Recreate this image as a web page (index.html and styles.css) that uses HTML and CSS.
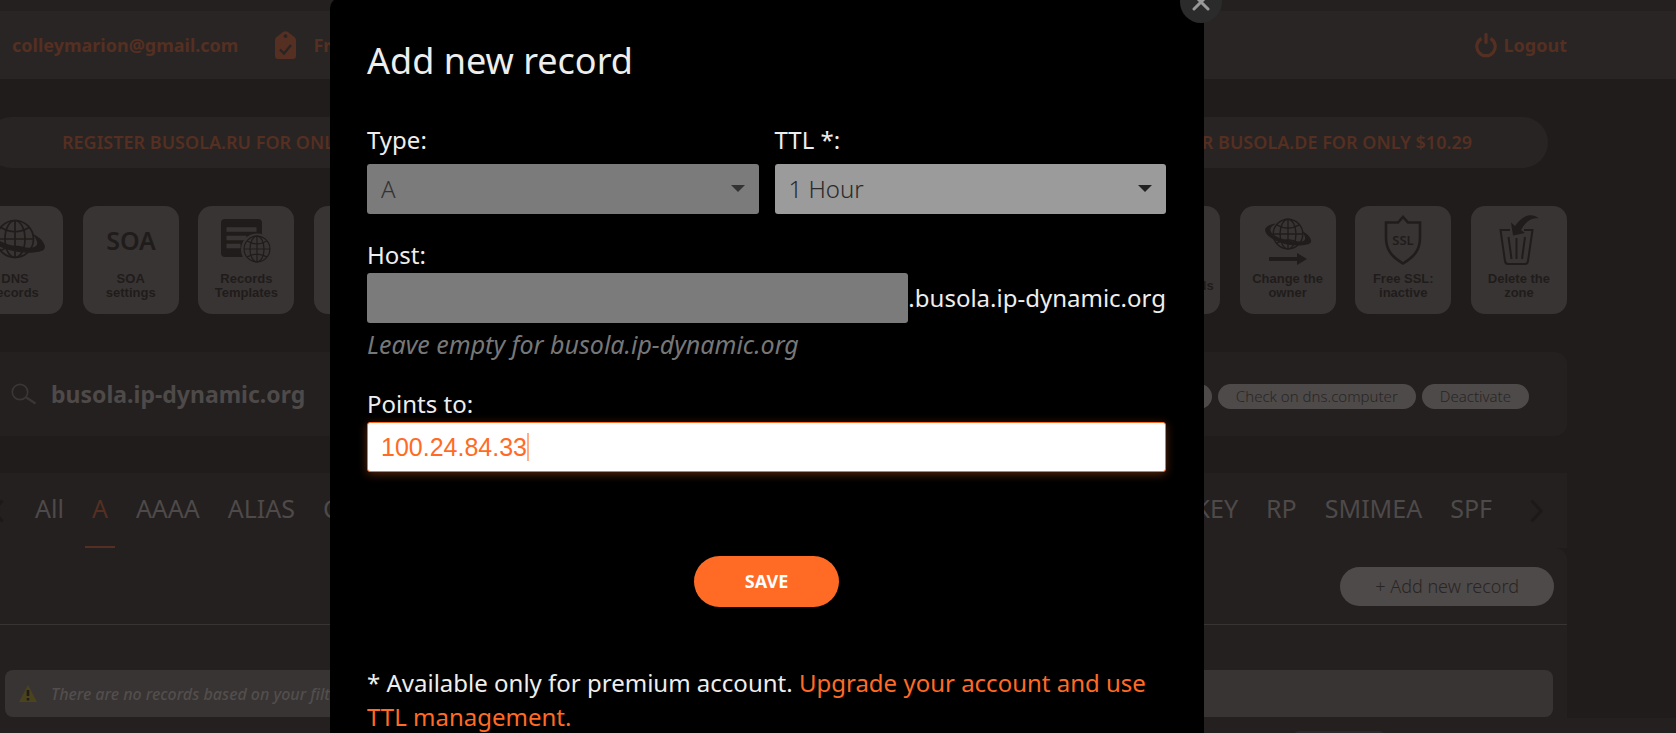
FILE: index.html
```
<!DOCTYPE html>
<html lang="en">
<head>
<meta charset="utf-8">
<title>Add new record</title>
<link rel="stylesheet" href="styles.css">
</head>
<body>
<svg class="symbols" aria-hidden="true">
  <symbol id="globe" viewBox="0 0 40 40">
    <g fill="none" stroke="currentColor" stroke-width="1.7">
      <circle cx="20" cy="20" r="18.5"/>
      <path d="M20 1.5v37M1.5 20h37M6 8.500Q20 17 34 8.500M6 31.500Q20 23 34 31.500"/>
      <ellipse cx="20" cy="20" rx="10" ry="18.500"/>
    </g>
  </symbol>
  <symbol id="ring" viewBox="24 16 48 25">
    <path fill="currentColor" d="M36 17.500C28 18.500 23 22 26 27C30 34 46 40 60 39.500C68 39 72 38 71 34C70 30 66 27 62 25C63 27 64 28 65 31C66 35 62 36 56 35.500C46 35 34 31 31 26C29 22 32 20 36 17.500Z"/>
  </symbol>
</svg>
<div class="page">
  <div class="topstrip"></div>
  <header class="header">
    <div class="container header-row">
      <a class="account" href="#">colleymarion@gmail.com</a>
      <a class="plan" href="#">
        <svg width="22" height="28" viewBox="0 0 22 28" aria-hidden="true"><path fill="currentColor" fill-rule="evenodd" d="M8 1Q10.500-.7 13 1L20 6.500Q21 7.500 21 9V25Q21 28 18 28H3Q0 28 0 25V9Q0 7.500 1 6.500ZM10.500 3.200a1.900 1.900 0 1 0 .01 0Z"/><path d="M5 18.500l4 4 7-8.500" fill="none" stroke="#292524" stroke-width="2.400"/></svg>
        <span>Free</span>
      </a>
      <a class="logout" href="#">
        <svg width="22" height="25" viewBox="0 0 22 25" aria-hidden="true"><g fill="none" stroke="currentColor" stroke-width="3.200"><path d="M6.500 5.500A9.200 9.200 0 1 0 15.500 5.500"/><path d="M11 1.500v8" stroke-linecap="round"/></g></svg>
        <span>Logout</span>
      </a>
    </div>
  </header>

  <main class="container">
    <div class="promo">
      <a href="#">REGISTER BUSOLA.RU FOR ONLY $4.99</a>
      <a href="#">REGISTER BUSOLA.DE FOR ONLY $10.29</a>
    </div>

    <nav class="cards">
      <a class="card" href="#">
        <svg viewBox="0 0 96 60" aria-hidden="true"><use href="#globe" x="28" y="13" width="40" height="40"/><use href="#ring" x="17" y="16" width="62" height="33"/></svg>
        <span>DNS<br>records</span>
      </a>
      <a class="card" href="#">
        <svg viewBox="0 0 96 60" aria-hidden="true"><text class="soa" x="48" y="44" text-anchor="middle">SOA</text></svg>
        <span>SOA<br>settings</span>
      </a>
      <a class="card" href="#">
        <svg viewBox="0 0 96 60" aria-hidden="true"><rect x="23" y="13" width="41" height="38" rx="4" fill="currentColor"/><path class="tile-line" d="M28.500 23.500h30M28.500 32h20M28.500 40h14" stroke-width="4.500"/><circle class="tile-fill" cx="59" cy="43.500" r="16"/><use href="#globe" x="45" y="29" width="28" height="28"/></svg>
        <span>Records<br>Templates</span>
      </a>
      <a class="card" href="#"></a>
      <a class="card" href="#"></a>
      <a class="card" href="#"></a>
      <a class="card" href="#"></a>
      <a class="card" href="#"></a>
      <a class="card" href="#"></a>
      <a class="card" href="#"></a>
      <a class="card" href="#">
        <svg viewBox="0 0 96 60" aria-hidden="true"></svg>
        <span>Mail forwards</span>
      </a>
      <a class="card" href="#">
        <svg viewBox="0 0 96 60" aria-hidden="true"><use href="#globe" x="32" y="12" width="32" height="32"/><use href="#ring" x="24" y="16" width="48" height="25"/><path fill="currentColor" d="M29 51h28v-4l10 6-10 6v-4H29z"/></svg>
        <span>Change the<br>owner</span>
      </a>
      <a class="card" href="#">
        <svg viewBox="0 0 96 60" aria-hidden="true"><path fill="none" stroke="currentColor" stroke-width="2.600" d="M31 16.500h12l5-5.500 5 5.500h12V32C65 44 59 51 48 57.500C37 51 31 44 31 32Z"/><text class="ssl" x="48" y="39" text-anchor="middle">SSL</text></svg>
        <span>Free SSL:<br>inactive</span>
      </a>
      <a class="card" href="#">
        <svg viewBox="0 0 96 60" aria-hidden="true"><path fill="none" stroke="currentColor" stroke-width="2" d="M39 24H29.500L34 55Q34.500 58 37 58H54Q56.500 58 57 55L61.500 24H53M37.500 31l3 22M45.500 32v21M54 31l-3 22"/><path fill="currentColor" d="M40 16.500l4 3.500C51 10 60 6 68 12.500C61 11 55 15 50 24l4 3L42 29.500Z"/></svg>
        <span>Delete the<br>zone</span>
      </a>
    </nav>

    <section class="domain">
      <svg width="26" height="22" viewBox="0 0 26 22" aria-hidden="true"><g fill="none" stroke="currentColor" stroke-width="1.700"><circle cx="9" cy="9" r="7.700"/><path d="M14.500 14l10 6.500" stroke-width="2.200"/></g></svg>
      <h1>busola.ip-dynamic.org</h1>
      <div class="domain-actions">
        <button class="pill" type="button">Update</button>
        <button class="pill" type="button">Check on dns.computer</button>
        <button class="pill" type="button">Deactivate</button>
      </div>
    </section>

    <nav class="tabs">
      <svg width="13" height="24" viewBox="0 0 13 24" aria-hidden="true"><path d="M11.500 1.500L2 12l9.500 10.500" fill="none" stroke="currentColor" stroke-width="3"/></svg>
      <div class="tab-list">
        <a href="#">All</a>
        <a class="active" href="#">A</a>
        <a href="#">AAAA</a>
        <a href="#">ALIAS</a>
        <a href="#">CNAME</a>
        <a class="tab-push" href="#">OPENPGPKEY</a>
        <a href="#">RP</a>
        <a href="#">SMIMEA</a>
        <a href="#">SPF</a>
      </div>
      <svg width="13" height="24" viewBox="0 0 13 24" aria-hidden="true"><path d="M1.500 1.500L11 12l-9.500 10.500" fill="none" stroke="currentColor" stroke-width="3"/></svg>
    </nav>

    <section class="records">
      <div class="toolbar"><button class="add" type="button">+ Add new record</button></div>
      <p class="notice">
        <svg width="18" height="17" viewBox="0 0 18 17" aria-hidden="true"><path fill="#4b431c" d="M9 0L18 17H0Z"/><path d="M9 5v6M9 13v2.500" stroke="#201c1b" stroke-width="2.600"/></svg>
        <span>There are no records based on your filtration.</span>
      </p>
    </section>
  </main>
  <footer class="footer"><div class="container footer-row"><div class="footer-tag"></div></div></footer>

  <div class="overlay">
    <form class="modal" role="dialog" aria-labelledby="modal-title">
      <button class="close" type="button" aria-label="Close">
        <svg width="18" height="18" viewBox="0 0 18 18" aria-hidden="true"><path d="M2 2l14 14M16 2L2 16" stroke="currentColor" stroke-width="3" stroke-linecap="round"/></svg>
      </button>
      <h2 id="modal-title">Add new record</h2>
      <div class="pair">
        <div class="field">
          <label for="type">Type:</label>
          <div class="select-box disabled">
            <select id="type" disabled><option>A</option></select>
            <svg width="14" height="7" viewBox="0 0 14 7" aria-hidden="true"><path d="M0 0h14L7 7z" fill="currentColor"/></svg>
          </div>
        </div>
        <div class="field">
          <label for="ttl">TTL *:</label>
          <div class="select-box">
            <select id="ttl"><option>1 Hour</option></select>
            <svg width="14" height="7" viewBox="0 0 14 7" aria-hidden="true"><path d="M0 0h14L7 7z" fill="currentColor"/></svg>
          </div>
        </div>
      </div>
      <div class="field host">
        <label for="host">Host:</label>
        <div class="host-row"><input id="host" type="text"><span>.busola.ip-dynamic.org</span></div>
        <p class="hint">Leave empty for busola.ip-dynamic.org</p>
      </div>
      <div class="field points">
        <label for="points">Points to:</label>
        <div class="points-box"><input id="points" type="text" value="100.24.84.33"><i class="caret"></i></div>
      </div>
      <button class="save" type="submit">SAVE</button>
      <p class="note">* Available only for premium account. <a href="#">Upgrade your account and use TTL management.</a></p>
    </form>
  </div>
</div>
</body>
</html>
```
FILE: styles.css
```
* { box-sizing: border-box; }
body {
  margin: 0;
  overflow: hidden;
  background: #201c1b;
  font-family: "Noto Sans", sans-serif;
}
a { color: inherit; text-decoration: none; }
h1, h2, p { margin: 0; }
button, input, select { font-family: inherit; border: 0; margin: 0; }
.symbols { position: absolute; width: 0; height: 0; }

.page { position: relative; min-height: 100vh; margin-left: -142px; }
.container { max-width: 1600px; margin: 0 auto; }

.topstrip { height: 11px; background: #242020; }
.header { background: #292524; color: #552f22; font-size: 18px; font-weight: 700; }
.header-row { display: flex; align-items: center; height: 68px; padding-left: 45px; }
.plan { display: flex; align-items: center; gap: 16px; margin-left: 37px; }
.logout { display: flex; align-items: center; gap: 7px; margin-left: auto; }

.promo {
  display: flex;
  justify-content: space-between;
  margin: 38px 19px 0;
  padding: 0 76px;
  border-radius: 26px;
  background: #282423;
  color: #552f22;
  font-size: 18px;
  font-weight: 600;
  line-height: 51px;
}

.cards { display: flex; justify-content: space-between; margin-top: 38px; }
.card {
  display: flex;
  flex-direction: column;
  width: 96px;
  height: 108px;
  padding-bottom: 8px;
  border-radius: 14px;
  background: #383433;
  color: #201c1b;
  font: bold 13px/14px "Liberation Sans", sans-serif;
  text-align: center;
  white-space: nowrap;
}
.card svg { width: 96px; height: 60px; }
.card span { margin: auto 0; }
.soa { font: 600 25px "Noto Sans", sans-serif; fill: currentColor; }
.ssl { font: 600 13px "Noto Sans", sans-serif; fill: currentColor; }
.tile-line { stroke: #383433; }
.tile-fill { fill: #383433; }

.domain {
  display: flex;
  align-items: center;
  gap: 14px;
  height: 84px;
  margin-top: 38px;
  padding: 0 38px 0 44px;
  border-radius: 12px;
  background: #242020;
  color: #3a3635;
}
.domain h1 { color: #4e4a49; font-size: 23px; font-weight: 700; }
.domain-actions { display: flex; gap: 6px; margin-left: auto; padding-top: 4px; }
.pill {
  padding: 0 18px;
  border-radius: 13px;
  background: #4e4a49;
  color: #292524;
  font-size: 15px;
  font-weight: 300;
  line-height: 25px;
}

.tabs {
  display: flex;
  align-items: center;
  height: 75px;
  margin-top: 37px;
  padding: 0 24px;
  background: #242020;
  color: #1c1918;
}
.tab-list { display: flex; flex: 1; gap: 14px; margin: 0 31px 0 24px; color: #4e4a49; font-size: 25px; }
.tab-list a { padding: 0 7px; line-height: 71px; border-bottom: 2px solid transparent; padding-bottom: 2px; }
.tab-list .active { color: #552f22; border-color: #552f22; }
.tab-list .tab-push { margin-left: auto; }

.records { border-top-right-radius: 12px; background: #242020; padding-bottom: 1px; }
.toolbar { display: flex; justify-content: flex-end; padding: 19px 13px 18px; border-bottom: 1px solid #383433; }
.add {
  padding: 0 35px;
  border-radius: 20px;
  background: #4e4a49;
  color: #292524;
  font-size: 18px;
  font-weight: 300;
  line-height: 39px;
}
.notice {
  display: flex;
  align-items: center;
  gap: 14px;
  height: 47px;
  margin: 45px 14px 0 38px;
  padding: 0 14px;
  border-radius: 8px;
  background: #383433;
  color: #524e4d;
  font-size: 16px;
  font-style: italic;
  font-weight: 500;
}

.footer { height: 40px; background: #242020; }
.footer-row { display: flex; justify-content: flex-end; padding: 13px 182px 0 0; }
.footer-tag { width: 92px; height: 27px; border-radius: 6px; background: #2c282c; }

.overlay {
  position: absolute;
  inset: 0;
  display: flex;
  justify-content: center;
  align-items: flex-start;
}
.modal {
  position: relative;
  width: 874px;
  margin-top: -2px;
  padding: 39px 38px 60px 37px;
  border-radius: 10px;
  background: #000;
  color: #eee;
  font-size: 24px;
  line-height: 32px;
}
.modal h2 { font-size: 36px; font-weight: 400; line-height: 48px; }
.modal label { display: block; }
.close {
  position: absolute;
  top: -17px;
  right: -18px;
  display: grid;
  place-items: center;
  width: 42px;
  height: 42px;
  padding: 0;
  border-radius: 50%;
  background: #2b2b2b;
  color: #999;
}
.pair { display: grid; grid-template-columns: 1fr 1fr; gap: 16px; margin-top: 39px; }
.select-box { position: relative; margin-top: 8px; color: #222; }
.select-box select {
  display: block;
  width: 100%;
  height: 50px;
  padding: 0 14px 2px;
  border-radius: 3px;
  appearance: none;
  background: #9b9b9b;
  color: #2a2a2a;
  font-size: 24px;
  font-weight: 300;
  opacity: 1;
}
.select-box svg { position: absolute; top: 21px; right: 14px; }
.disabled { color: #333; }
.disabled select { background: #7b7b7b; color: #333; }

.host { margin-top: 25px; }
.host-row { display: flex; align-items: center; margin-top: 2px; }
.host-row input { flex: 1; min-width: 0; height: 50px; padding: 0 14px; border-radius: 3px; background: #7b7b7b; font-size: 24px; }
.hint { margin-top: 4px; color: #777; font-size: 25px; font-style: italic; line-height: 34px; }

.points { margin-top: 27px; }
.points-box { position: relative; margin-top: 2px; }
.points-box input {
  display: block;
  width: 100%;
  height: 50px;
  padding: 0 13px;
  border: 1px solid #ff6b24;
  border-radius: 3px;
  background: #fff;
  box-shadow: 0 2px 10px rgba(255, 107, 36, 0.35);
  color: #ff6b24;
  font: 25px "Liberation Sans", sans-serif;
}
.caret { position: absolute; top: 11px; left: 160px; width: 2px; height: 28px; background: #ffb08a; }
.save {
  display: block;
  margin: 84px auto 0;
  padding: 0 51px;
  border-radius: 26px;
  background: #ff6b24;
  color: #fff;
  font-size: 18px;
  font-weight: 700;
  line-height: 51px;
}
.note { margin-top: 59px; line-height: 34px; }
.note a { color: #ff6b24; }
```
